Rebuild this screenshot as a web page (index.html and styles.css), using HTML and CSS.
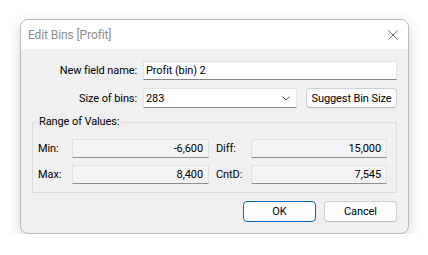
FILE: index.html
```html
<!DOCTYPE html>
<html>
<head>
    <meta charset="UTF-8">
    <title>Edit Bins [Profit]</title>
    <link rel="stylesheet" href="styles.css">
</head>
<body>
    <div class="window">
        <div class="titlebar">
            <span class="title">Edit Bins [Profit]</span>
            <svg class="close" width="10" height="10" viewBox="0 0 10 10">
                <path d="M0.5 0.5 L9.5 9.5 M9.5 0.5 L0.5 9.5" stroke="#6e6e6e" stroke-width="1" fill="none"/>
            </svg>
        </div>

        <div class="content">
            <div class="form">
                <label class="label">New field name:</label>
                <div class="edit">Profit (bin) 2</div>

                <label class="label">Size of bins:</label>
                <div class="bin-row">
                    <div class="combo">
                        <span>283</span>
                        <svg width="8" height="5" viewBox="0 0 8 5">
                            <path d="M0.5 0.5 L4 4 L7.5 0.5" stroke="#555" stroke-width="1" fill="none"/>
                        </svg>
                    </div>
                    <div class="button">Suggest Bin Size</div>
                </div>
            </div>

            <fieldset class="group">
                <legend>Range of Values:</legend>
                <div class="range">
                    <span class="label-sm">Min:</span>
                    <div class="readout">-6,600</div>
                    <span class="label-sm second">Diff:</span>
                    <div class="readout">15,000</div>

                    <span class="label-sm">Max:</span>
                    <div class="readout">8,400</div>
                    <span class="label-sm second">CntD:</span>
                    <div class="readout">7,545</div>
                </div>
            </fieldset>

            <div class="actions">
                <div class="button default">OK</div>
                <div class="button">Cancel</div>
            </div>
        </div>
    </div>
</body>
</html>
```
FILE: styles.css
```css
:root {
    --bg: #f0f0f0;
    --line: #dcdcdc;
    --txt: #000000;
    --accent: #0067c0;
}

body {
    margin: 0;
    background-color: #ffffff;
    font-family: Roboto, "Liberation Sans", sans-serif;
    font-size: 11px;
    letter-spacing: -0.1px;
    color: var(--txt);
}

.window {
    margin: 19px 0 0 20px;
    width: 387px;
    background-color: var(--bg);
    border: 1px solid #b9b9b9;
    border-radius: 8px;
    overflow: hidden;
    box-shadow: 0 4px 14px rgba(0, 0, 0, 0.16);
}

.titlebar {
    height: 29px;
    background-color: #ffffff;
    display: flex;
    align-items: center;
    justify-content: space-between;
    padding: 0 10px 0 7px;
}

.title {
    color: #8c8c8c;
    font-size: 12px;
}

.close {
    display: block;
}

.content {
    padding: 12px 11px 11px 0;
}

.form {
    display: grid;
    grid-template-columns: 116px 1fr;
    grid-template-rows: 19px 20px;
    column-gap: 6px;
    row-gap: 8px;
    align-items: center;
}

.label {
    text-align: right;
}

.edit {
    height: 19px;
    box-sizing: border-box;
    background-color: #ffffff;
    border: 1px solid #e3e3e3;
    border-bottom-color: #868686;
    padding: 0 2px;
    display: flex;
    align-items: center;
}

.bin-row {
    display: flex;
    gap: 9px;
    height: 20px;
}

.combo {
    width: 154px;
    box-sizing: border-box;
    background-color: #ffffff;
    border: 1px solid #e3e3e3;
    border-bottom-color: #868686;
    padding: 0 6px 0 2px;
    display: flex;
    align-items: center;
    justify-content: space-between;
}

.button {
    flex: 1;
    box-sizing: border-box;
    background-color: #fdfdfd;
    border: 1px solid #d0d0d0;
    border-bottom-color: #b8b8b8;
    border-radius: 4px;
    display: flex;
    align-items: center;
    justify-content: center;
}

.group {
    margin: 7px 0 0 11px;
    padding: 10px 9px 8px 5px;
    border: 1px solid var(--line);
    min-width: 0;
}

.group legend {
    padding: 0 2px 0 1px;
    line-height: 14px;
}

.range {
    display: grid;
    grid-template-columns: 34px 137px 42px 136px;
    grid-template-rows: 19px 19px;
    row-gap: 7px;
    align-items: center;
}

.label-sm.second {
    padding-left: 7px;
}

.readout {
    height: 19px;
    box-sizing: border-box;
    background-color: #f3f3f3;
    border: 1px solid #e0e0e0;
    border-bottom-color: #8f8f8f;
    padding: 0 5px;
    display: flex;
    align-items: center;
    justify-content: flex-end;
}

.actions {
    display: flex;
    justify-content: flex-end;
    gap: 8px;
    margin-top: 8px;
}

.actions .button {
    flex: none;
    width: 73px;
    height: 21px;
}

.actions .button.default {
    border: 1px solid var(--accent);
}
```
